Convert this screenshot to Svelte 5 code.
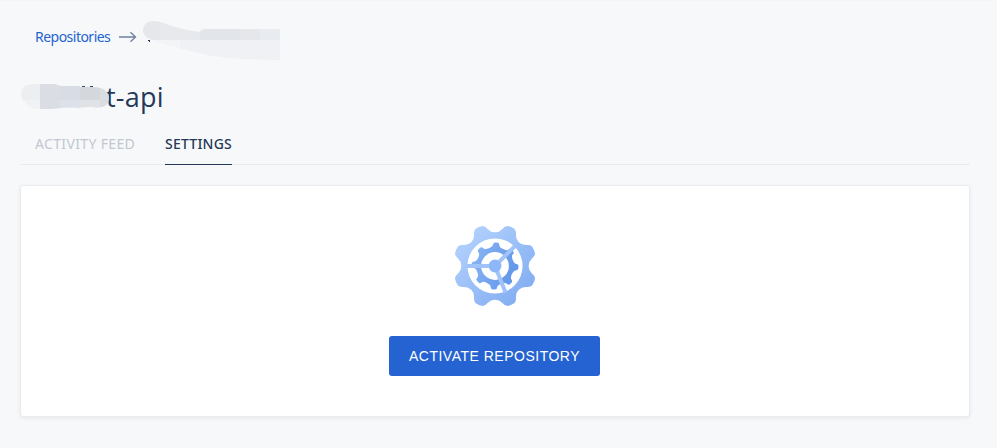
<script>
  const outerHalf = [[-12.6,-30.5],[-8.8,-32],[-7.3,-36],[-6.2,-39.8],[-3.8,-40.9],[0,-41.8],[3.8,-40.9],[6.2,-39.8],[7.3,-36],[8.8,-32],[12.6,-30.5]];
  const innerHalf = [[-12.8,-30.8],[-7.2,-33],[-6,-36],[-5.6,-40.6],[-3.6,-41.4],[0,-42],[3.6,-41.4],[5.6,-40.6],[6,-36],[7.2,-33],[12.8,-30.8]];
  function gear(half, scale, offset, hole) {
    let d = '';
    for (let i = 0; i < 8; i++) {
      const a = ((i * 45 + offset) * Math.PI) / 180;
      const p = half.map(([x, y]) => `${(scale * (x * Math.cos(a) - y * Math.sin(a))).toFixed(2)} ${(scale * (x * Math.sin(a) + y * Math.cos(a))).toFixed(2)}`);
      d += `${i ? 'L' : 'M'}${p[0]}Q${p[1]} ${p[2]}Q${p[3]} ${p[4]}Q${p[5]} ${p[6]}Q${p[7]} ${p[8]}Q${p[9]} ${p[10]}`;
    }
    return `${d}ZM${-hole} 0a${hole} ${hole} 0 1 0 ${hole * 2} 0a${hole} ${hole} 0 1 0 ${-hole * 2} 0Z`;
  }
  const outer = gear(outerHalf, 1.02, 22.5, 27.6);
  const inner = gear(innerHalf, 0.562, 3, 13.9);
</script>

<main>
  <nav>
    <a href="#repositories">Repositories</a>
    <svg class="arrow" width="18" height="12" viewBox="0 0 18 12"><path d="M0 6H16.5M11.5 1.2L16.5 6L11.5 10.8" fill="none" stroke="#6f809d" stroke-width="1.3" /></svg>
    <svg class="crumb-mask" width="138" height="40" viewBox="142 20 138 40" shape-rendering="crispEdges">
      <clipPath id="blob"><path d="M143 31Q143 21 154 21Q160 21 166 24Q183 30 200 32Q201 29 205 29H280V60Q236 60 207 55Q176 48 155 41Q143 38 143 31Z" /></clipPath>
      <g clip-path="url(#blob)">
        <path fill="#f3f4f6" d="M142 40H180V60H142Z" /><path fill="#eff1f4" d="M180 40H280V60H180Z" />
        <path fill="#e5e7eb" d="M142 20H160V40H142Z" /><path fill="#e7e9ed" d="M160 20H200V40H160Z" />
        <path fill="#e2e5e9" d="M200 20H240V40H200Z" /><path fill="#e5e7ea" d="M240 20H260V40H240Z" /><path fill="#e8ebf0" d="M260 20H280V40H260Z" />
      </g>
      <path fill="#253858" d="M149 40h1v2h-1zM148 40h1v1h-1z" />
    </svg>
  </nav>
  <header>
    <svg class="title-mask" width="90" height="28" viewBox="20 82 90 28" shape-rendering="crispEdges">
      <clipPath id="cover"><path d="M21 94Q21 84 34 84H55Q59 86 63 86H80V87Q99 86 105 90Q109 94 109 98Q109 103 105 106Q99 109 92 107Q84 107 80 108Q69 107 60 108Q55 109 48 109H36Q29 108 24 101Q21 98 21 94Z" /></clipPath>
      <path fill="#253858" d="M82 86h3v1h-3zM90 86h3v1h-3z" />
      <g clip-path="url(#cover)">
        <path fill="#eceef0" d="M20 82H40V100H20Z" /><path fill="#f1f2f4" d="M20 100H40V110H20Z" />
        <path fill="#dadde3" d="M40 82H60V110H40Z" /><path fill="#d8dce4" d="M60 82H80V100H60Z" />
        <path fill="#dde1ea" d="M60 100H80V110H60Z" /><path fill="#d4d7dc" d="M80 82H100V100H80Z" />
        <path fill="#e0e2e6" d="M80 100H100V110H80Z" /><path fill="#dadde1" d="M100 82H110V110H100Z" />
      </g>
    </svg>
    <h1>t-api</h1>
  </header>
  <div class="tabs"><span class="feed">ACTIVITY FEED</span><span class="active">SETTINGS</span></div>
  <section>
    <svg width="84" height="84" viewBox="-42 -42 84 84">
      <defs>
        <linearGradient id="pale" gradientUnits="userSpaceOnUse" x1="-32" y1="-32" x2="32" y2="32"><stop stop-color="#b2d1fd" /><stop offset="1" stop-color="#82adf2" /></linearGradient>
        <linearGradient id="deep" gradientUnits="userSpaceOnUse" x1="-20" y1="-8" x2="22" y2="6"><stop stop-color="#86b1f3" /><stop offset="1" stop-color="#6196e9" /></linearGradient>
      </defs>
      <path d={inner} fill="url(#deep)" fill-rule="evenodd" />
      <path d={outer} fill="url(#pale)" fill-rule="evenodd" />
      <path d="M-28 0H0L20 -20M0 0L10.5 26.5" fill="none" stroke="#a0c4fa" stroke-width="4" />
      <circle r="6.4" fill="#8db7f7" />
    </svg>
    <button>ACTIVATE REPOSITORY</button>
  </section>
</main>

<style>
  :global(body) { margin: 0; background: #f7f8fa; }
  main { box-sizing: border-box; width: 997px; height: 448px; padding: 20px 27px 0 20px; background: #f7f8fa; border-top: 1px solid #f4f5f7; font-family: "Noto Sans", "Open Sans", sans-serif; overflow: hidden; }
  nav { display: flex; height: 40px; padding-left: 15px; margin-top: -1px; }
  a { width: 76px; font-size: 14px; line-height: 33px; letter-spacing: -0.52px; color: #2463d1; text-decoration: none; white-space: nowrap; }
  .arrow { margin: 11px 0 0 8px; flex: none; }
  .crumb-mask { margin-left: 5px; flex: none; }
  header { display: flex; height: 50px; padding-top: 22px; box-sizing: border-box; }
  .title-mask { flex: none; position: relative; z-index: 1; }
  h1 { margin: -5px 0 0 -4px; font-family: "Open Sans", sans-serif; font-size: 27px; line-height: 40px; font-weight: 400; letter-spacing: 0.2px; color: #253858; }
  .tabs { display: flex; gap: 30px; height: 54px; padding-left: 15px; border-bottom: 1px solid #ebecf0; font-size: 14px; }
  .tabs span { box-sizing: border-box; height: 55px; padding-top: 24px; line-height: 20px; white-space: nowrap; }
  .feed { width: 100px; color: #c1c7d0; letter-spacing: 0.35px; }
  .active { width: 67px; color: #253858; border-bottom: 1px solid #253858; letter-spacing: 0.22px; font-weight: 500; }
  section { box-sizing: border-box; width: 950px; height: 232px; margin-top: 20px; padding-top: 38px; display: flex; flex-direction: column; align-items: center; background: #fff; border: 1px solid #ebecee; border-radius: 3px; box-shadow: 0 1px 4px #091e4212; }
  button { width: 211px; height: 40px; margin: 28px 1px 0 0; padding: 0; border: 0; border-radius: 3px; background: #2463d1; color: #fff; font: 14px "Liberation Sans", Arial, sans-serif; letter-spacing: 0.5px; }
</style>
